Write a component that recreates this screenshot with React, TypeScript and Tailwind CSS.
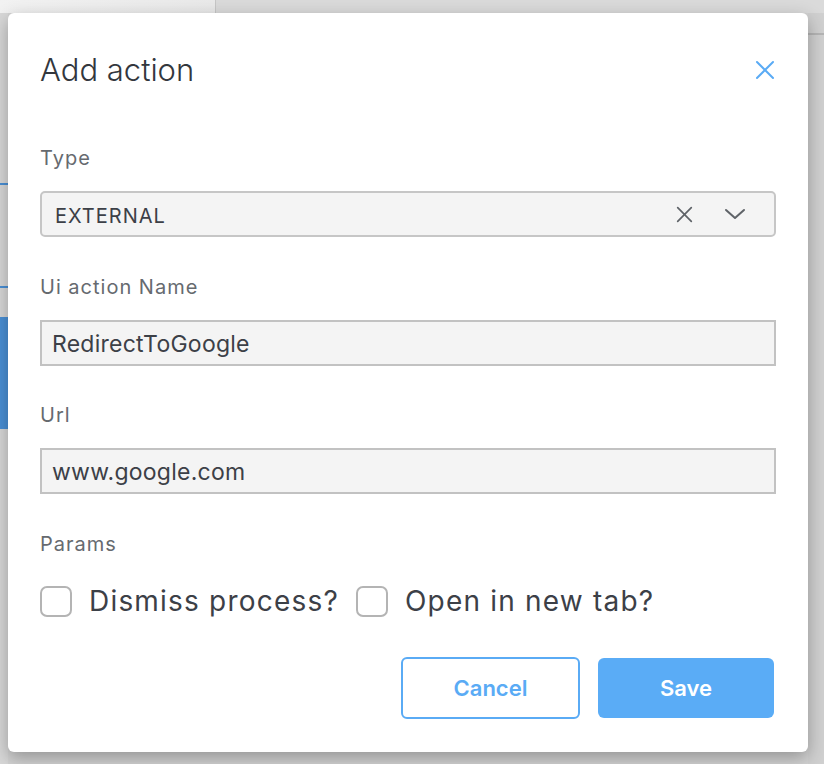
import React from 'react';

const font = { fontFamily: 'Inter, "Noto Sans", "Liberation Sans", sans-serif' };

const XIcon = ({ className }: { className?: string }) => (
  <svg viewBox="0 0 20 20" className={className} fill="none" stroke="currentColor" strokeWidth="2" strokeLinecap="round">
    <path d="M2 2 L18 18 M18 2 L2 18" />
  </svg>
);

const Chevron = ({ className }: { className?: string }) => (
  <svg viewBox="0 0 22 12" className={className} fill="none" stroke="currentColor" strokeWidth="2" strokeLinecap="round" strokeLinejoin="round">
    <path d="M2 2 L11 10 L20 2" />
  </svg>
);

const Label: React.FC<{ children: React.ReactNode; className?: string }> = ({ children, className }) => (
  <div className={`text-[20px] leading-[24px] tracking-[1px] text-[#666a6f] ${className ?? ''}`}>{children}</div>
);

const Field: React.FC<{ label: string; value: string; top: string }> = ({ label, value, top }) => (
  <div className={top}>
    <Label>{label}</Label>
    <div className="mt-[21px] h-[46px] flex items-center border-2 border-[#c2c2c2] bg-[#f4f4f4] px-[10px] pt-[2px] text-[23px] tracking-[0.25px] text-[#3c4047]">
      {value}
    </div>
  </div>
);

const Checkbox: React.FC<{ label: string }> = ({ label }) => (
  <label className="flex items-center gap-[17px]">
    <span className="w-[32px] h-[31px] rounded-[7px] border-2 border-[#b4b4b4] bg-white" />
    <span className="text-[28px] leading-[36px] tracking-[1.2px] text-[#3c4047]">{label}</span>
  </label>
);

export default function App() {
  return (
    <div className="relative w-[824px] h-[764px] overflow-hidden bg-[#d3d3d3]" style={font}>
      {/* dimmed page behind */}
      <div className="flex h-[13px]">
        <div className="w-[216px] bg-gradient-to-r from-[#f2f2f2] to-[#e9e9e9] border-r border-[#c6c6c6]" />
        <div className="flex-1 bg-[#dadada]" />
      </div>
      <div className="flex h-[751px]">
        <div className="w-[8px] bg-[#d8d8d8] flex flex-col">
          <div className="mt-[170px] h-[2px] bg-[#4a90d6]" />
          <div className="mt-[101px] h-[2px] bg-[#4a90d6]" />
          <div className="mt-[29px] h-[112px] bg-[#4a90d6]" />
        </div>
        <div className="flex-1" />
        <div className="w-[16px] bg-[#d0d0d0] flex flex-col">
          <div className="mt-[20px] h-[2px] bg-[#b5b5b5]" />
        </div>
      </div>

      {/* dialog */}
      <div className="absolute left-[8px] top-[13px] w-[800px] h-[739px] rounded-[6px] bg-white shadow-[0_6px_18px_rgba(0,0,0,0.3)] px-[32px] pt-[39px]">
        <div className="flex items-center justify-between h-[36px]">
          <h2 className="text-[31px] leading-[36px] font-light text-[#33373d]">Add action</h2>
          <XIcon className="w-[20px] h-[20px] mr-[1px] text-[#5aabf5]" />
        </div>

        <div className="mt-[58px]">
          <Label>Type</Label>
          <div className="mt-[21px] h-[46px] flex items-center rounded-[5px] border-2 border-[#c6c6c6] bg-[#f4f4f4] pl-[13px] pr-[28px]">
            <span className="flex-1 pt-[4px] text-[20px] tracking-[1px] text-[#3c4047]">EXTERNAL</span>
            <XIcon className="w-[17px] h-[17px] text-[#5f6368]" />
            <Chevron className="ml-[31px] w-[22px] h-[12px] text-[#5f6368]" />
          </div>
        </div>

        <Field label="Ui action Name" value="RedirectToGoogle" top="mt-[38px]" />
        <Field label="Url" value="www.google.com" top="mt-[37px]" />

        <Label className="mt-[38px]">Params</Label>
        <div className="mt-[27px] flex items-center gap-[17px]">
          <Checkbox label="Dismiss process?" />
          <Checkbox label="Open in new tab?" />
        </div>

        <div className="mt-[38px] flex justify-end gap-[18px] pr-[2px]">
          <button className="w-[179px] h-[62px] rounded-[6px] border-2 border-[#5aabf5] bg-white text-[22px] font-semibold text-[#5aabf5]">
            Cancel
          </button>
          <button className="w-[176px] h-[60px] mt-[1px] rounded-[6px] bg-[#5aacf6] text-[22px] font-semibold text-white">
            Save
          </button>
        </div>
      </div>
    </div>
  );
}
